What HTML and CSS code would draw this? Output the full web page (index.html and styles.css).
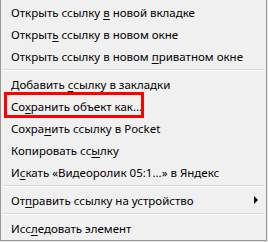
FILE: index.html
```html
<!DOCTYPE html>
<html lang="ru">
<head>
    <meta charset="UTF-8">
    <title>Контекстное меню</title>
    <link rel="stylesheet" href="styles.css">
</head>
<body>
    <div class="menu">
        <div class="item"><span>Открыть ссылку <u>в</u> новой вкладке</span></div>
        <div class="item"><span>Открыт<u>ь</u> ссылку в новом окне</span></div>
        <div class="item"><span>Открыть ссылку в новом <u>п</u>риватном окне</span></div>
        <div class="sep"></div>
        <div class="item"><span>Добавить <u>с</u>сылку в закладки</span></div>
        <div class="item"><span>Со<u>х</u>ранить объект как...</span><span class="mark"></span></div>
        <div class="item"><span>Сохра<u>н</u>ить ссылку в Pocket</span></div>
        <div class="item"><span>Копировать сс<u>ы</u>лку</span></div>
        <div class="item"><span>И<u>с</u>кать «Видеоролик 05:1...» в Яндекс</span></div>
        <div class="sep"></div>
        <div class="item sub"><span>От<u>п</u>равить ссылку на устройство</span><span class="arrow"></span></div>
        <div class="sep"></div>
        <div class="item"><span>Исс<u>л</u>едовать элемент</span></div>
    </div>
</body>
</html>
```

FILE: styles.css
```css
body {
    margin: 0;
    background: #e6e6e6;
    font-family: 'Noto Sans', sans-serif;
}
.menu {
    width: 267px;
    height: 241px;
    box-sizing: border-box;
    padding-top: 1px;
    background: #f0f0f0;
    border-left: 1px solid #979797;
    border-right: 1px solid #979797;
    border-bottom: 1px solid #979797;
    display: flex;
    flex-direction: column;
}
.item {
    position: relative;
    height: 22px;
    flex: none;
    display: flex;
    align-items: center;
    padding-left: 10px;
    padding-right: 8px;
    font-size: 11.5px;
    color: #000;
    white-space: nowrap;
}
.item u {
    text-decoration-thickness: 1px;
    text-underline-offset: 2px;
}
.sub {
    justify-content: space-between;
}
.arrow {
    width: 0;
    height: 0;
    border-left: 4px solid #000;
    border-top: 4px solid transparent;
    border-bottom: 4px solid transparent;
}
.sep {
    flex: none;
    height: 0;
    margin: 2px 1px 2px 2px;
    border-top: 1px solid #d7d7d7;
    border-bottom: 1px solid #fff;
}
.mark {
    position: absolute;
    left: 3px;
    top: -3px;
    width: 134px;
    height: 20px;
    border: 3px solid #f00;
}
```
